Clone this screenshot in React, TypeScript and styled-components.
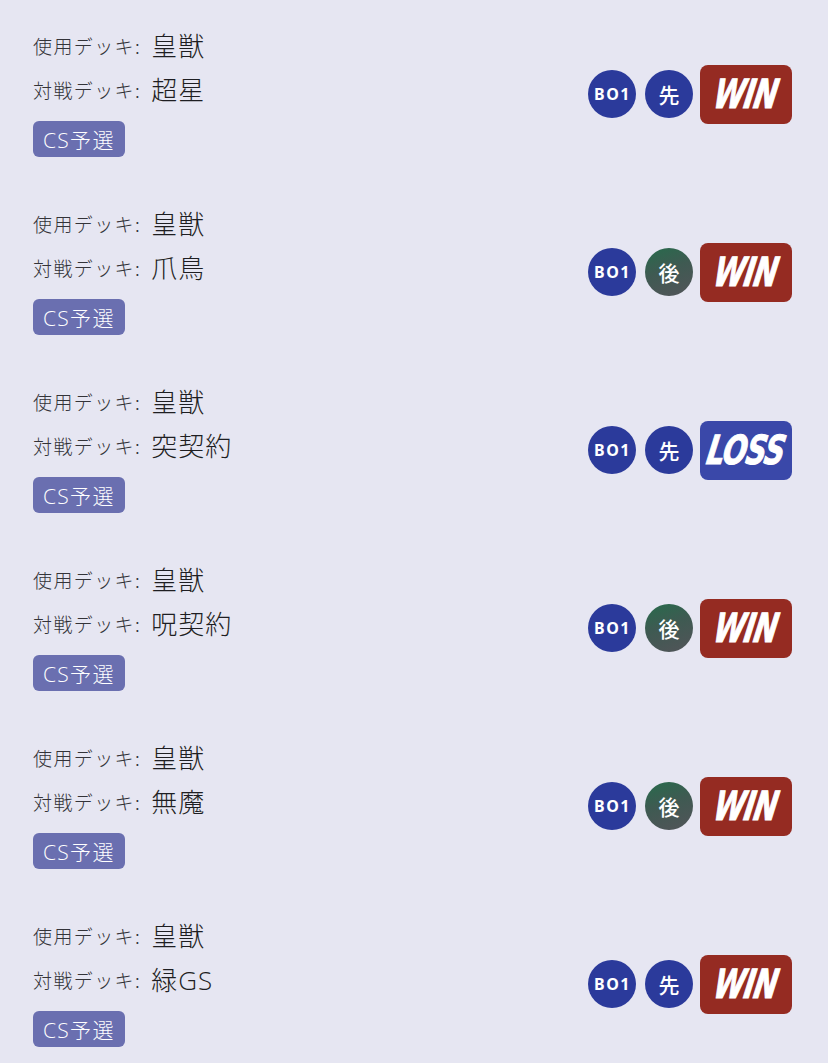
import styled, { createGlobalStyle } from "styled-components"

type Match = {
  myDeck: string
  oppDeck: string
  event: string
  format: string
  first: boolean
  win: boolean
}

const matches: Match[] = [
  { myDeck: "皇獣", oppDeck: "超星", event: "CS予選", format: "BO1", first: true, win: true },
  { myDeck: "皇獣", oppDeck: "爪鳥", event: "CS予選", format: "BO1", first: false, win: true },
  { myDeck: "皇獣", oppDeck: "突契約", event: "CS予選", format: "BO1", first: true, win: false },
  { myDeck: "皇獣", oppDeck: "呪契約", event: "CS予選", format: "BO1", first: false, win: true },
  { myDeck: "皇獣", oppDeck: "無魔", event: "CS予選", format: "BO1", first: false, win: true },
  { myDeck: "皇獣", oppDeck: "緑GS", event: "CS予選", format: "BO1", first: true, win: true },
]

const App = () => {
  return (
    <>
      <GlobalStyle />
      <List>
        {matches.map((m, i) => (
          <Row key={i}>
            <Info>
              <Line>
                <Label>使用デッキ:</Label>
                <Deck>{m.myDeck}</Deck>
              </Line>
              <Line>
                <Label>対戦デッキ:</Label>
                <Deck>{m.oppDeck}</Deck>
              </Line>
              <Tag>{m.event}</Tag>
            </Info>
            <Badges>
              <Circle>
                <Format>{m.format}</Format>
              </Circle>
              <Circle $second={!m.first}>
                <Turn>{m.first ? "先" : "後"}</Turn>
              </Circle>
              <Result $win={m.win}>
                <ResultText>{m.win ? "WIN" : "LOSS"}</ResultText>
              </Result>
            </Badges>
          </Row>
        ))}
      </List>
    </>
  )
}

export default App

const GlobalStyle = createGlobalStyle`
  html, body {
    margin: 0;
    background: #e6e6f2;
  }
  body {
    font-family: "Noto Sans CJK JP", "Noto Sans", sans-serif;
  }
`

const List = styled.div`
  width: 828px;
  min-height: 1063px;
  background: #e6e6f2;
`

const Row = styled.div`
  height: 178px;
  box-sizing: border-box;
  padding: 23px 36px 21px 33px;
  display: flex;
  align-items: center;
  justify-content: space-between;
`

const Info = styled.div`
  display: flex;
  flex-direction: column;
  align-items: flex-start;
`

const Line = styled.div`
  height: 44px;
  display: flex;
  align-items: center;
  gap: 10px;
`

const Label = styled.span`
  font-size: 19px;
  letter-spacing: 1.4px;
  font-weight: 300;
  color: #333338;
`

const Deck = styled.span`
  font-family: "Open Sans", "Noto Sans CJK JP", sans-serif;
  font-size: 26px;
  letter-spacing: 1px;
  font-weight: 300;
  color: #1e1e22;
`

const Tag = styled.div`
  margin-top: 10px;
  height: 36px;
  padding: 0 10px 0 10px;
  display: flex;
  align-items: center;
  border-radius: 6px;
  background: #6a6fb0;
  color: #fff;
  font-family: "Open Sans", "Noto Sans CJK JP", sans-serif;
  font-size: 21px;
  font-weight: 300;
  letter-spacing: 1.3px;
`

const Badges = styled.div`
  display: flex;
  align-items: center;
  margin-top: 8px;
`

const Circle = styled.div<{ $second?: boolean }>`
  width: 48px;
  height: 48px;
  border-radius: 50%;
  margin-right: 9px;
  display: flex;
  align-items: center;
  justify-content: center;
  color: #fff;
  background: ${(p) =>
    p.$second ? "linear-gradient(160deg, #276b4c 0%, #3f5a52 45%, #525459 100%)" : "#2b3a9b"};
  &:nth-child(2) {
    margin-right: 7px;
  }
`

const Format = styled.span`
  font-family: "Noto Sans", sans-serif;
  font-weight: 700;
  font-size: 16px;
  letter-spacing: 1.5px;
  margin-left: 1px;
`

const Turn = styled.span`
  font-size: 21px;
  font-weight: 500;
`

const Result = styled.div<{ $win: boolean }>`
  width: 92px;
  height: 59px;
  border-radius: 8px;
  background: ${(p) => (p.$win ? "#952b22" : "#3a48a9")};
  display: flex;
  align-items: center;
  justify-content: center;
  overflow: hidden;
`

const ResultText = styled.span`
  font-family: "DejaVu Sans Condensed", "Liberation Sans Narrow", sans-serif;
  font-weight: 900;
  font-style: italic;
  font-size: 40px;
  color: #fff;
  letter-spacing: -1px;
  transform: skewX(-10deg) scaleX(0.78);
  -webkit-text-stroke: 1px #fff;
`
